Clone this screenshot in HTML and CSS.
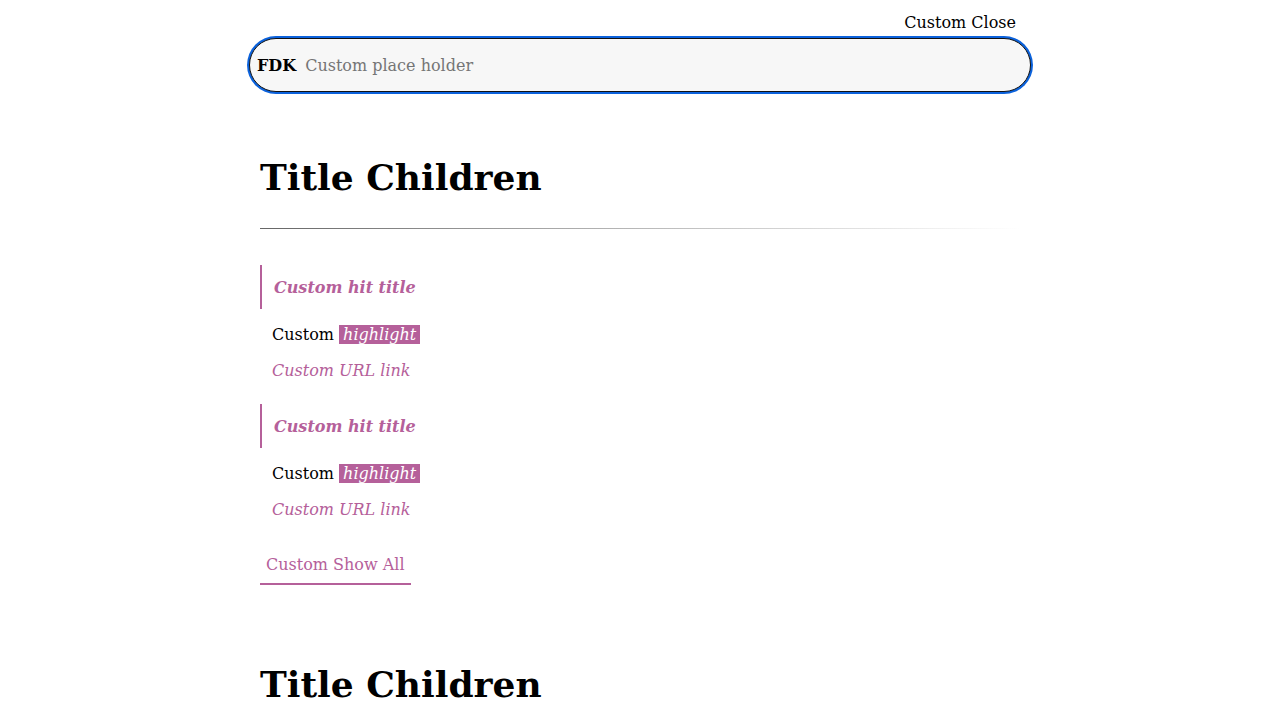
FILE: index.html
```html
<!DOCTYPE html>
<html>
<head>
<meta charset="utf-8">
<link rel="stylesheet" href="styles.css">
</head>
<body>
<div class="page">
  <div class="top">
    <button class="close">Custom Close</button>
  </div>
  <div class="search">
    <span class="logo">FDK</span>
    <span class="placeholder">Custom place holder</span>
  </div>
  <div class="content">
    <section class="group">
      <h1 class="title">Title Children</h1>
      <div class="divider"></div>
      <div class="hit">
        <div class="hit-title">Custom hit title</div>
        <div class="hit-text">Custom <mark class="hl">highlight</mark></div>
        <div class="hit-url">Custom URL link</div>
      </div>
      <div class="hit">
        <div class="hit-title">Custom hit title</div>
        <div class="hit-text">Custom <mark class="hl">highlight</mark></div>
        <div class="hit-url">Custom URL link</div>
      </div>
      <div class="show-all"><span>Custom Show All</span></div>
    </section>
    <section class="group">
      <h1 class="title second">Title Children</h1>
    </section>
  </div>
</div>
</body>
</html>
```
FILE: styles.css
```css
html, body {
  margin: 0;
  padding: 0;
  background: #fff;
  font-family: "DejaVu Serif", serif;
  color: #000;
  overflow: hidden;
}
.page {
  width: 784px;
  margin: 0 auto;
}
.top {
  display: flex;
  justify-content: flex-end;
  padding: 10px 16px 0 0;
  height: 26px;
}
.close {
  background: none;
  border: none;
  padding: 0;
  font-family: "DejaVu Serif", serif;
  font-size: 16px;
  color: #000;
  line-height: 20px;
}
.search {
  margin-top: 2px;
  height: 54px;
  box-sizing: border-box;
  border: 1px solid #111;
  border-radius: 28px;
  box-shadow: 0 0 0 2px #0b62dc;
  background: #f7f7f7;
  display: flex;
  align-items: center;
  padding-left: 7px;
  margin-left: 1px;
  margin-right: 1px;
}
.logo {
  font-weight: bold;
  font-size: 16px;
  margin-right: 9px;
}
.placeholder {
  font-size: 16px;
  color: #757575;
}
.content {
  padding: 0 12px;
}
.title {
  margin: 0;
  font-size: 36px;
  font-weight: bold;
  line-height: 44px;
}
.group:first-child .title {
  margin-top: 63px;
}
.divider {
  margin-top: 29px;
  height: 1px;
  background: linear-gradient(to right, #666, #aaa 40%, #fff);
}
.hit {
  margin-top: 36px;
}
.hit + .hit {
  margin-top: 22px;
}
.hit-title {
  border-left: 2px solid #b5609a;
  padding: 12px 12px 10px;
  font-weight: bold;
  font-style: italic;
  color: #b5609a;
  font-size: 16px;
  line-height: 22px;
}
.hit-text {
  margin-top: 15px;
  padding-left: 12px;
  font-size: 16px;
  line-height: 22px;
}
.hl {
  background: #b5609a;
  color: #fff;
  font-style: italic;
  padding: 0 4px;
}
.hit-url {
  margin-top: 14px;
  padding-left: 12px;
  font-size: 16px;
  font-style: italic;
  color: #b5609a;
  line-height: 22px;
}
.show-all {
  margin-top: 33px;
  display: flex;
}
.show-all span {
  color: #b5609a;
  font-size: 16px;
  padding: 0 6px 7px;
  border-bottom: 2px solid #b5609a;
  line-height: 22px;
}
.title.second {
  margin-top: 77px;
}
```
